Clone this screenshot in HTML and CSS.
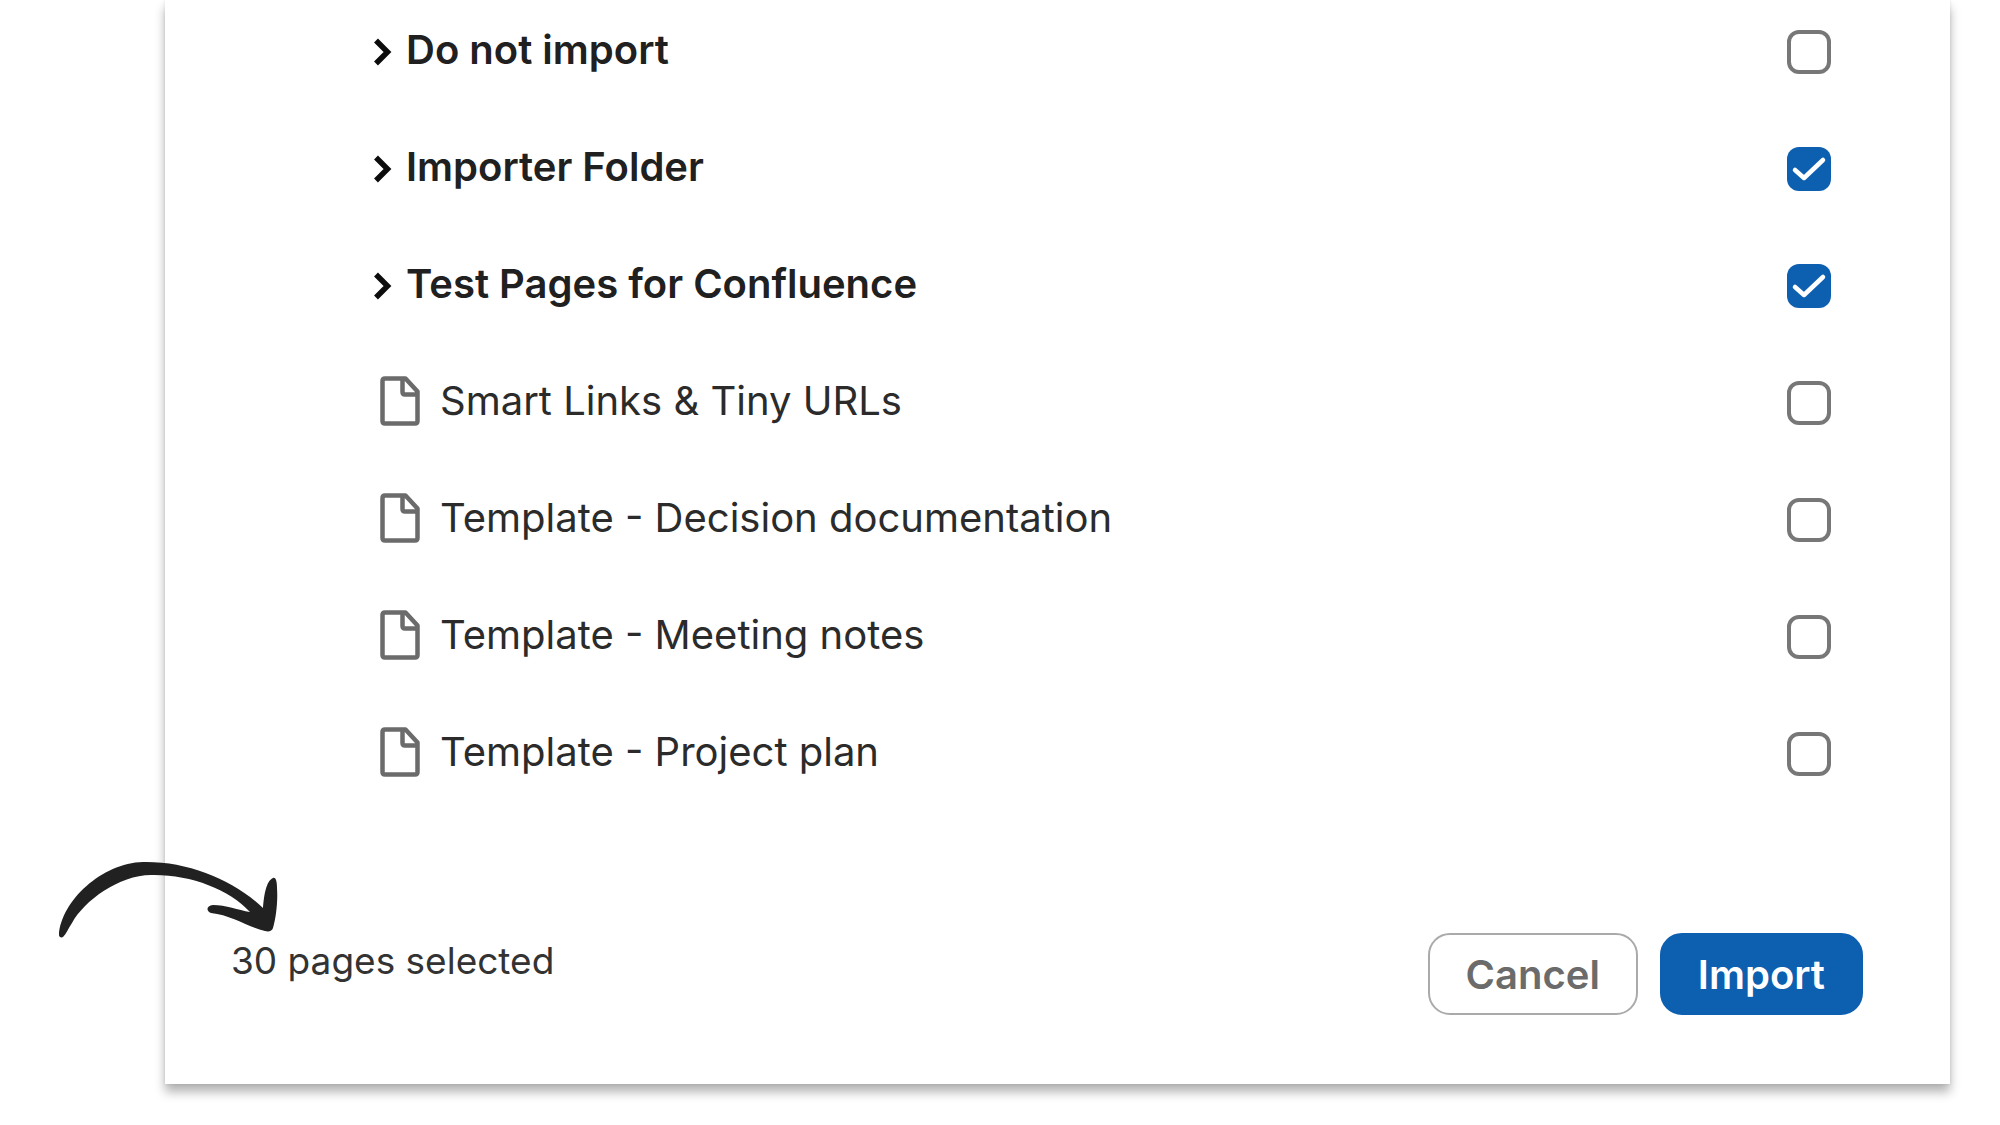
FILE: index.html
```
<!DOCTYPE html>
<html lang="en">
<head>
    <meta charset="UTF-8">
    <meta name="viewport" content="width=device-width, initial-scale=1.0">
    <title>Import pages</title>
    <link rel="stylesheet" href="styles.css">
</head>
<body>

<!-- Shared icons -->
<svg class="icon-defs" aria-hidden="true">
    <symbol id="chevron" viewBox="0 0 18 28">
        <path d="M2 2.5 L13.5 14 L2 25.5" fill="none" stroke="#0c0c0c" stroke-width="5.5"/>
    </symbol>
    <symbol id="file" viewBox="0 0 40 50">
        <path d="M5 2.5 H25.5 L37.5 15.5 V45 Q37.5 47.5 35 47.5 H5 Q2.5 47.5 2.5 45 V5 Q2.5 2.5 5 2.5 Z M22.5 2.5 V16 Q22.5 18.5 25 18.5 H37.5" fill="none" stroke="#6b6b6b" stroke-width="4.5" stroke-linejoin="round"/>
    </symbol>
</svg>

<form class="dialog">
    <ul class="page-list">
        <li class="page-row folder">
            <button type="button" class="expand-btn" aria-label="Expand"><svg class="chevron"><use href="#chevron"/></svg></button>
            <label for="page1">Do not import</label>
            <input type="checkbox" id="page1">
        </li>
        <li class="page-row folder">
            <button type="button" class="expand-btn" aria-label="Expand"><svg class="chevron"><use href="#chevron"/></svg></button>
            <label for="page2">Importer Folder</label>
            <input type="checkbox" id="page2" checked>
        </li>
        <li class="page-row folder">
            <button type="button" class="expand-btn" aria-label="Expand"><svg class="chevron"><use href="#chevron"/></svg></button>
            <label for="page3">Test Pages for Confluence</label>
            <input type="checkbox" id="page3" checked>
        </li>
        <li class="page-row">
            <svg class="file-icon"><use href="#file"/></svg>
            <label for="page4">Smart Links &amp; Tiny URLs</label>
            <input type="checkbox" id="page4">
        </li>
        <li class="page-row">
            <svg class="file-icon"><use href="#file"/></svg>
            <label for="page5">Template - Decision documentation</label>
            <input type="checkbox" id="page5">
        </li>
        <li class="page-row">
            <svg class="file-icon"><use href="#file"/></svg>
            <label for="page6">Template - Meeting notes</label>
            <input type="checkbox" id="page6">
        </li>
        <li class="page-row">
            <svg class="file-icon"><use href="#file"/></svg>
            <label for="page7">Template - Project plan</label>
            <input type="checkbox" id="page7">
        </li>
    </ul>

    <div class="dialog-footer">
        <p class="selected-count">30 pages selected</p>
        <button type="button" class="btn cancel-btn">Cancel</button>
        <button type="submit" class="btn import-btn">Import</button>

        <!-- Arrow pointing at the page count -->
        <svg class="arrow" viewBox="55 858 225 84" aria-hidden="true">
            <path fill="#212121" d="M59 935 C61 901 102 863 143 862 C188 861 234 880 263 908 C264 896 266 881 273 878 C276 877 277 882 277 888 C278 902 276 918 273 928 C272 931 269 932 265 931 C248 927 231 915 211 913 C206 911 206 906 213 905 C226 905 238 910 250 912 C229 889 189 874 151 875 C119 875 84 901 72 923 C68 929 66 934 63 937 C61 938 59 937 59 935 Z"/>
        </svg>
    </div>
</form>

</body>
</html>
```
FILE: styles.css
```
* {
    box-sizing: border-box;
}

body {
    font-family: Inter, "Liberation Sans", sans-serif;
    background-color: #fff;
    color: #2b2b2b;
    margin: 0;
    padding: 0 50px 32px 165px;
}

.icon-defs {
    display: none;
}

.dialog {
    background-color: #fff;
    padding: 30px 87px 69px 66px;
    box-shadow: 0 8px 10px rgba(0,0,0,0.3), 0 0 3px rgba(0,0,0,0.1);
}

.page-list {
    list-style: none;
    display: flex;
    flex-direction: column;
    gap: 73px;
    margin: 0;
    padding: 0 32px 0 143px;
}

.page-row {
    display: flex;
    align-items: center;
    height: 44px;
    padding-left: 6px;
    font-size: 40px;
    line-height: 44px;
}

.page-row label {
    flex: 1;
    padding-bottom: 4px;
}

.folder {
    padding-left: 0;
    color: #202020;
    font-weight: 600;
}

.expand-btn {
    display: flex;
    padding: 0;
    border: none;
    background: none;
    margin-right: 14px;
    cursor: pointer;
}

.chevron {
    width: 18px;
    height: 28px;
}

.file-icon {
    width: 40px;
    height: 50px;
    margin-right: 20px;
    margin-bottom: 4px;
}

.page-row input {
    appearance: none;
    width: 44px;
    height: 44px;
    margin: 0;
    border: 4px solid #777;
    border-radius: 12px;
    cursor: pointer;
}

.page-row input:checked {
    border: none;
    background: #0d5fb0 url("data:image/svg+xml,%3Csvg xmlns='http://www.w3.org/2000/svg' viewBox='0 0 44 44'%3E%3Cpath d='M8 23 L17 31 L36 13' fill='none' stroke='white' stroke-width='4.5' stroke-linecap='round' stroke-linejoin='round'/%3E%3C/svg%3E") center / 44px 44px no-repeat;
}

.dialog-footer {
    position: relative;
    display: flex;
    align-items: flex-start;
    gap: 22px;
    margin-top: 157px;
}

.selected-count {
    flex: 1;
    margin: 0;
    color: #333;
    font-size: 37px;
    line-height: 56px;
}

.btn {
    height: 82px;
    padding: 0 36px;
    border: 2px solid #aaa;
    border-radius: 22px;
    font-family: inherit;
    font-size: 40px;
    font-weight: 600;
    cursor: pointer;
}

.cancel-btn {
    background-color: #fff;
    color: #6b6b6b;
}

.import-btn {
    background-color: #0d5fb0;
    border-color: #0d5fb0;
    color: #fff;
}

/* overlaps the dialog's left edge */
.arrow {
    position: absolute;
    left: -176px;
    top: -75px;
    width: 225px;
    height: 84px;
}
```
